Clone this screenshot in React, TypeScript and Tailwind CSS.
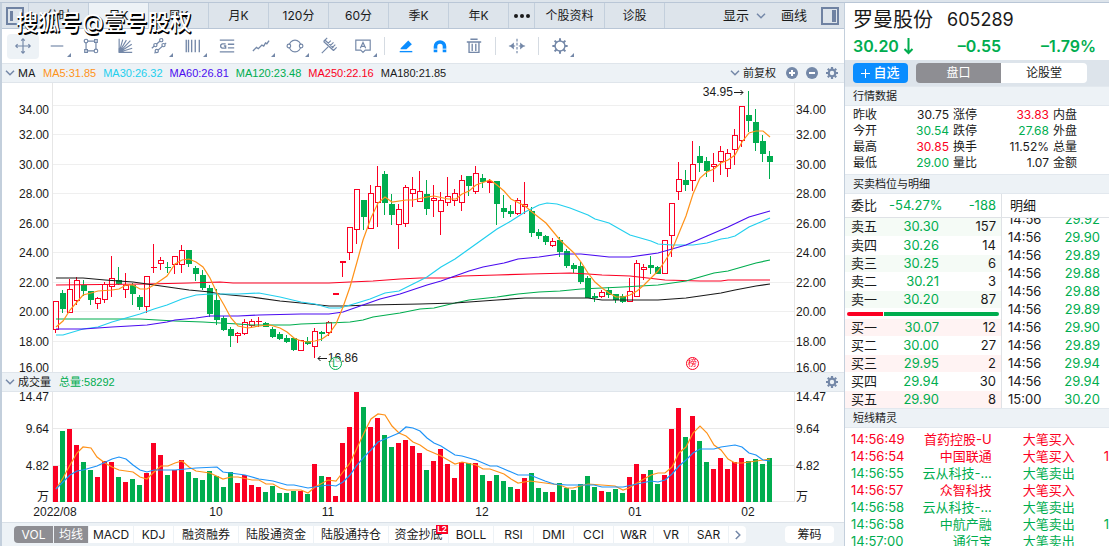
import { useState, type ReactNode } from "react";
import clsx from "clsx";

type Side = "R" | "G";
type Candle = [Side, number, number, number, number, number];

const RED = "#fb0023";
const GREEN = "#00ad4f";

// side, high, body top, body bottom, low, volume
const CANDLES: Candle[] = [
  ["R", 301, 301, 330, 333, 36], ["G", 290, 293, 309, 313, 71], ["R", 279, 289, 313, 313, 73],
  ["R", 277, 280, 301, 305, 57], ["G", 280, 285, 291, 296, 40], ["G", 291, 291, 300, 305, 32],
  ["R", 297, 298, 304, 309, 25], ["R", 282, 284, 300, 303, 41], ["R", 256, 278, 287, 297, 40],
  ["G", 267, 280, 284, 285, 25], ["R", 273, 285, 290, 298, 20], ["G", 283, 285, 294, 305, 23],
  ["G", 295, 297, 307, 310, 17], ["R", 276, 276, 307, 313, 29], ["R", 244, 267, 268, 273, 59],
  ["R", 257, 260, 264, 270, 47], ["G", 262, 267, 268, 273, 27], ["R", 256, 256, 265, 274, 32],
  ["R", 245, 250, 265, 273, 42], ["G", 250, 250, 264, 267, 30], ["G", 266, 268, 274, 281, 24],
  ["G", 270, 275, 288, 290, 22], ["G", 285, 288, 314, 317, 31], ["G", 289, 300, 320, 325, 26],
  ["G", 316, 318, 330, 331, 15], ["G", 327, 329, 336, 347, 30], ["R", 332, 333, 336, 343, 19],
  ["R", 319, 322, 334, 335, 27], ["R", 319, 321, 326, 328, 17], ["R", 317, 321, 322, 327, 15],
  ["G", 322, 323, 327, 327, 10], ["G", 327, 329, 337, 338, 16], ["G", 332, 334, 339, 340, 9],
  ["G", 335, 338, 342, 343, 9], ["G", 338, 338, 350, 351, 11], ["R", 340, 340, 351, 351, 11],
  ["G", 337, 341, 344, 345, 8], ["R", 328, 331, 347, 358, 38], ["G", 331, 332, 334, 341, 26],
  ["R", 321, 322, 333, 336, 25], ["R", 293, 293, 295, 295, 6], ["R", 261, 261, 263, 277, 59],
  ["R", 227, 227, 253, 260, 75], ["R", 189, 189, 230, 244, 110], ["G", 200, 200, 217, 230, 95],
  ["R", 185, 193, 229, 229, 75], ["R", 166, 186, 203, 227, 84], ["G", 171, 174, 203, 215, 67],
  ["G", 194, 204, 215, 225, 55], ["R", 204, 209, 225, 249, 59], ["R", 185, 187, 224, 227, 62],
  ["R", 177, 189, 194, 207, 56], ["R", 171, 191, 202, 202, 49], ["G", 180, 194, 209, 215, 32],
  ["R", 185, 198, 201, 217, 41], ["R", 192, 200, 212, 235, 53], ["R", 177, 196, 203, 206, 38],
  ["R", 189, 193, 201, 206, 24], ["R", 175, 180, 203, 211, 40], ["G", 176, 176, 186, 196, 39],
  ["R", 166, 173, 192, 194, 39], ["G", 174, 178, 182, 188, 27], ["R", 179, 181, 183, 193, 21],
  ["G", 181, 181, 204, 225, 27], ["G", 195, 208, 212, 218, 21], ["G", 205, 211, 214, 217, 15],
  ["R", 198, 200, 214, 215, 13], ["R", 182, 204, 207, 214, 24], ["G", 207, 211, 233, 237, 29],
  ["G", 229, 232, 236, 239, 14], ["G", 235, 236, 242, 245, 10], ["R", 238, 241, 246, 247, 10],
  ["G", 237, 240, 252, 257, 19], ["G", 249, 251, 266, 268, 14], ["G", 263, 265, 269, 273, 12],
  ["G", 262, 266, 282, 284, 18], ["G", 276, 278, 298, 298, 26], ["G", 293, 296, 298, 302, 15],
  ["R", 290, 292, 297, 298, 11], ["G", 287, 290, 295, 298, 10], ["G", 294, 294, 300, 303, 13],
  ["G", 294, 296, 302, 303, 9], ["R", 278, 291, 302, 302, 25], ["R", 260, 263, 297, 297, 38],
  ["R", 264, 267, 270, 280, 28], ["G", 256, 265, 268, 274, 32], ["G", 266, 267, 274, 274, 18],
  ["R", 240, 240, 274, 274, 27], ["R", 203, 203, 236, 257, 73], ["R", 162, 179, 192, 200, 94],
  ["G", 170, 180, 185, 191, 65], ["R", 141, 164, 181, 191, 86], ["G", 146, 156, 163, 172, 61],
  ["G", 157, 161, 171, 177, 40], ["R", 153, 164, 167, 182, 33], ["R", 146, 151, 162, 175, 44],
  ["R", 149, 153, 169, 177, 33], ["R", 129, 135, 150, 165, 40], ["R", 106, 106, 141, 147, 44],
  ["G", 91, 115, 121, 132, 41], ["G", 109, 122, 143, 151, 43], ["G", 135, 141, 154, 162, 38],
  ["G", 151, 156, 162, 179, 44],
];

const MA_LINES = [
  { color: "#fb0023", points: "56,285 147,284 189,283 220,282 233,283 329,283 350,282 373,281 400,279 420,278 448,278 462,276 497,275 530,274 570,273 588,274 602,275 630,276 665,280 700,281 721,281 728,280 770,280" },
  { color: "#00ad4f", points: "56,319 105,319 140,319 175,321 203,322 238,324 252,325 290,325 301,324 329,323 350,322 363,320 373,317 400,313 420,309 434,308 455,303 469,300 497,297 518,294 539,292 560,291 581,289 623,287 658,285 686,281 700,277 714,273 728,271 742,267 756,263 770,260" },
  { color: "#1a1a1a", points: "56,278 83,278 105,280 133,282 147,284 168,287 189,290 210,292 220,294 252,297 280,301 301,303 329,306 343,306 370,305 420,304 455,303 497,300 525,298 588,298 602,300 658,300 686,298 700,296 721,293 735,290 756,286 770,284" },
  { color: "#22cfee", points: "56,335 63,335 83,329 98,327 112,322 126,318 140,314 154,309 167,305 182,299 196,295 210,294 238,294 259,293 280,297 301,302 315,304 329,308 340,308 357,303 370,299 385,293 399,291 413,284 427,277 441,267 455,259 469,249 483,239 497,229 511,221 525,212 539,205 547,203 557,204 570,208 588,215 595,219 609,223 630,235 651,241 658,244 672,245 693,245 707,243 721,239 728,238 735,236 749,227 756,224 770,218" },
  { color: "#4b0cf0", points: "56,329 83,329 112,327 147,325 167,322 175,320 196,318 210,316 238,316 259,315 301,314 329,314 343,312 363,305 380,299 400,294 427,285 441,281 455,276 469,271 483,267 504,263 518,259 539,257 560,254 581,254 609,257 630,257 658,253 672,249 686,245 707,236 728,227 749,217 763,213 770,211" },
  { color: "#ff9219", points: "56,327 63,321 70,310 77,302 83,295 91,293 98,291 112,290 119,289 126,285 133,285 140,289 147,289 154,285 167,276 175,264 182,260 189,259 196,262 203,267 210,278 217,293 224,305 231,318 238,326 248,328 259,326 270,325 280,328 287,332 294,338 301,341 308,342 315,341 322,339 329,334 336,324 343,307 350,287 357,262 363,240 371,218 378,203 385,197 392,202 406,200 413,200 427,197 434,196 448,199 456,199 462,194 469,191 476,185 490,180 497,185 504,191 511,199 525,206 532,212 546,223 560,240 574,253 581,262 588,273 595,282 602,288 609,293 616,297 623,297 630,295 637,291 644,285 651,278 658,271 665,261 672,250 679,233 686,216 693,194 700,178 707,172 714,169 721,163 728,160 735,155 742,142 749,133 756,131 763,131 770,137" },
];

const VOL_LINES = [
  { color: "#ff9219", points: "56,489 63,478 70,465 77,453 83,447 91,448 97,457 105,463 112,467 119,470 126,471 133,472 140,477 147,479 154,472 161,466 168,466 175,463 182,461 189,467 196,471 210,473 223,479 231,477 238,477 252,480 259,480 266,484 273,484 280,488 287,490 301,490 308,493 315,487 328,480 336,481 343,472 350,463 357,448 364,433 371,419 378,414 385,415 392,426 399,433 406,436 413,442 420,445 427,450 441,456 448,460 455,464 462,462 476,465 483,469 490,469 504,474 511,479 518,483 530,481 560,485 567,488 573,488 588,484 615,486 623,490 629,488 637,483 651,475 658,473 665,473 672,467 679,453 686,447 693,433 700,426 707,433 714,445 721,450 728,459 735,463 742,463 749,462 763,460 770,459" },
  { color: "#1d93f8", points: "56,489 63,482 70,475 77,471 83,470 97,466 112,459 119,457 126,459 133,465 140,470 147,472 154,470 175,470 196,468 217,467 223,472 245,475 259,479 273,481 287,485 294,485 308,488 328,485 336,486 343,482 350,475 357,465 364,457 371,450 378,442 392,436 399,433 406,427 413,428 420,431 427,438 434,443 441,446 455,455 462,456 476,460 490,466 497,466 504,469 518,475 530,475 545,481 554,484 567,485 594,485 602,487 623,487 637,484 651,481 658,482 665,480 672,474 679,466 686,460 693,453 700,449 714,449 721,447 735,445 742,447 749,453 756,455 763,460 770,461" },
];

const PRICE_TICKS = [
  { label: "34.00", y: 27 }, { label: "32.00", y: 52 }, { label: "30.00", y: 82 },
  { label: "28.00", y: 111 }, { label: "26.00", y: 141 }, { label: "24.00", y: 170 },
  { label: "22.00", y: 200 }, { label: "20.00", y: 229 }, { label: "18.00", y: 259 },
  { label: "16.00", y: 285 },
];
const VOL_TICKS = [
  { label: "14.47", y: 5 }, { label: "9.64", y: 37 }, { label: "4.82", y: 74 }, { label: "万", y: 105 },
];
const PRICE_GRID = [105.5, 134.5, 164.5, 193.5, 223.5, 252.5, 282.5, 311.5, 341.5];
const MONTHS = [
  { label: "2022/08", x: 2 }, { label: "10", x: 163 }, { label: "11", x: 275 },
  { label: "12", x: 429 }, { label: "01", x: 582 }, { label: "02", x: 695 },
];

const PERIODS = ["分时", "日K", "周K", "月K", "120分", "60分", "季K", "年K"];

const MA_LEGEND = [
  { label: "MA5:31.85", cls: "text-[#ff9219]" },
  { label: "MA30:26.32", cls: "text-[#22cfee]" },
  { label: "MA60:26.81", cls: "text-[#4b0cf0]" },
  { label: "MA120:23.48", cls: "text-[#00ad4f]" },
  { label: "MA250:22.16", cls: "text-[#fb0023]" },
  { label: "MA180:21.85", cls: "text-[#1a1a1a]" },
];

const INDICATORS = [
  { label: "VOL", w: "w-[39px]", on: true },
  { label: "均线", w: "w-[34px]", on: true },
  { label: "MACD", w: "w-[44px]" },
  { label: "KDJ", w: "w-[39px]" },
  { label: "融资融券", w: "w-[64px]" },
  { label: "陆股通资金", w: "w-[74px]" },
  { label: "陆股通持仓", w: "w-[74px]" },
  { label: "资金抄底", w: "w-[59px]", badge: "L2" },
  { label: "BOLL", w: "w-[44px]" },
  { label: "RSI", w: "w-[39px]" },
  { label: "DMI", w: "w-[39px]" },
  { label: "CCI", w: "w-[39px]" },
  { label: "W&R", w: "w-[39px]" },
  { label: "VR", w: "w-[34px]" },
  { label: "SAR", w: "w-[39px]" },
];

const QUOTE = [
  ["昨收", "30.75", "k", "涨停", "33.83", "r", "内盘"],
  ["今开", "30.54", "g", "跌停", "27.68", "g", "外盘"],
  ["最高", "30.85", "r", "换手", "11.52%", "k", "总量"],
  ["最低", "29.00", "g", "量比", "1.07", "k", "金额"],
];
const TONE: Record<string, string> = { k: "text-[#1a1a1a]", r: "text-[#fb0023]", g: "text-[#00ad4f]" };

const ASKS = [["卖五", "30.30", "157"], ["卖四", "30.26", "14"], ["卖三", "30.25", "6"], ["卖二", "30.21", "3"], ["卖一", "30.20", "87"]];
const BIDS = [["买一", "30.07", "12"], ["买二", "30.00", "27"], ["买三", "29.95", "2"], ["买四", "29.94", "30"], ["买五", "29.90", "8"]];
const TRADES = [
  ["14:56", "29.92"], ["14:56", "29.90"], ["14:56", "29.89"], ["14:56", "29.88"], ["14:56", "29.88"], ["14:56", "29.89"],
  ["14:56", "29.90"], ["14:56", "29.89"], ["14:56", "29.94"], ["14:56", "29.94"], ["15:00", "30.20"],
];
const ALERTS = [
  { time: "14:56:49", name: "首药控股-U", kind: "大笔买入", tail: "" },
  { time: "14:56:54", name: "中国联通", kind: "大笔买入", tail: "1" },
  { time: "14:56:55", name: "云从科技-...", kind: "大笔卖出", tail: "" },
  { time: "14:56:57", name: "众智科技", kind: "大笔买入", tail: "" },
  { time: "14:56:58", name: "云从科技-...", kind: "大笔卖出", tail: "" },
  { time: "14:56:58", name: "中航产融", kind: "大笔卖出", tail: "1" },
  { time: "14:57:00", name: "通行宝", kind: "大笔卖出", tail: "" },
];

const TOOLS: { name: string; more?: boolean; art: ReactNode }[] = [
  { name: "移动", art: <path d="M10 2v16M2 10h16M8 4l2-2 2 2M8 16l2 2 2-2M4 8l-2 2 2 2M16 8l2 2-2 2" /> },
  { name: "线段", more: true, art: <path d="M3 10h14" /> },
  { name: "矩形", art: (
    <>
      <path d="M4.500 4.500h11v11h-11z" />
      <circle cx="4.500" cy="4.500" r="2" fill="#fff" />
      <circle cx="15.500" cy="15.500" r="2" fill="#fff" />
      <path d="M14 3h3v3h-3zM3 14h3v3H3z" fill="#fff" />
    </>
  ) },
  { name: "扇形线", art: (
    <>
      <path d="M3.500 2v15H18M3.500 17L7.500 3M3.500 17l8-13.500M3.500 17L16 4M3.500 17l14-9M3.500 17l14.500-4.500" />
      <path d="M3 12.500h4l1.500 4.500H3z" fill="currentColor" stroke="none" />
    </>
  ) },
  { name: "平行线", more: true, art: (
    <>
      <path d="M2 12.500L14 2M5 18L18 6.500" />
      <circle cx="6" cy="9" r="1.800" fill="#fff" />
      <circle cx="12.500" cy="3.500" r="1.800" fill="#fff" />
      <circle cx="7.500" cy="15.500" r="1.800" fill="#fff" />
      <circle cx="15" cy="9" r="1.800" fill="#fff" />
    </>
  ) },
  { name: "周期线", more: true, art: <path d="M2.500 3v14M5 3v14M8.500 3v14M12.500 3v14M17 3v14" strokeWidth="1.5" /> },
  { name: "黄金分割", art: (
    <path d="M2 3.500h16M11 8h7M11 12h7M2 16.500h16M8.500 7.700H4.500L3 9v2l1.500 1.300h4v-2.300H6.500" strokeWidth="1.5" />
  ) },
  { name: "波浪线", more: true, art: <path d="M1 15.500l4-4 2 1.500 4-4 2 1 2-3.500 1.500 1L19 4" strokeWidth="1.5" /> },
  { name: "圆形", more: true, art: (
    <>
      <circle cx="10" cy="10" r="6.500" />
      <circle cx="3.200" cy="10" r="2" fill="#fff" />
      <circle cx="16.800" cy="10" r="2" fill="#fff" />
    </>
  ) },
  { name: "叉线", art: <path d="M2 18l7-7M4 5l11 10M4 5l4-4M7.500 8.500L12 4M10 11l5-5M12.500 13L17 8.500M15 15l3.500-3.500M5 3l10 9" /> },
  { name: "文字", more: true, art: <path d="M2 3.500h16v11h-5.500L10 17l-2.500-2.500H2zM7 12.500L10 6l3 6.500M8 10.500h4" /> },
];

function Toolbutton({ name, more, active, children }: { name: string; more?: boolean; active?: boolean; children: ReactNode }) {
  return (
    <button
      type="button"
      aria-label={name}
      className={clsx("relative flex h-[25px] w-8 shrink-0 items-center justify-center text-[#7488a8]", active && "rounded-sm bg-[#edf2f6]")}
    >
      <svg width="18" height="18" viewBox="0 0 20 20" fill="none" stroke="currentColor" strokeWidth="1.3" aria-hidden="true">
        {children}
      </svg>
      {more && (
        <svg className="absolute right-0.5 bottom-0.5" width="4" height="4" viewBox="0 0 4 4" aria-hidden="true">
          <path d="M4 0v4H0z" fill="currentColor" />
        </svg>
      )}
    </button>
  );
}

function Chevron({ className }: { className?: string }) {
  return (
    <svg className={className} width="10" height="6" viewBox="0 0 10 6" fill="none" stroke="#7488a8" strokeWidth="1.5" aria-hidden="true">
      <path d="M1 .8l4 4 4-4" />
    </svg>
  );
}

function Gear() {
  return (
    <svg width="12" height="12" viewBox="0 0 12 12" fill="none" stroke="#7488a8" aria-hidden="true">
      <circle cx="6" cy="6" r="3.300" strokeWidth="2.200" />
      <path d="M6 0v2M6 10v2M0 6h2M10 6h2M1.800 1.800l1.400 1.400M8.800 8.800l1.400 1.400M1.800 10.200l1.400-1.400M8.800 3.200l1.400-1.400" strokeWidth="2.200" />
    </svg>
  );
}

function Separator() {
  return <span className="mx-[3px] h-[18px] w-px shrink-0 bg-[#d5dbe2]" />;
}

function PriceAxis({ ticks, side }: { ticks: { label: string; y: number }[]; side: "left" | "right" }) {
  return (
    <div className={clsx("relative shrink-0 text-[12px] leading-[14px]", side === "left" ? "w-[50px]" : "w-[49px]")}>
      {ticks.map((tick) => (
        <span
          key={tick.label}
          className={clsx("absolute -translate-y-1/2", side === "left" ? "right-[3px]" : "left-px")}
          style={{ top: tick.y }}
        >
          {tick.label}
        </span>
      ))}
    </div>
  );
}

function CandleShape({ candle, index }: { candle: Candle; index: number }) {
  const [side, high, top, bottom, low] = candle;
  const x = 53 + index * 7;
  const color = side === "R" ? RED : GREEN;
  const solid = side === "G" || bottom - top <= 2;
  return (
    <g shapeRendering="crispEdges">
      {high < top && <rect x={x + 2} y={high} width="1" height={top - high} fill={color} />}
      {low > bottom && <rect x={x + 2} y={bottom} width="1" height={low - bottom} fill={color} />}
      {solid ? (
        <rect x={x} y={top} width="6" height={bottom - top} fill={color} />
      ) : (
        <rect x={x + 0.5} y={top + 0.5} width="5" height={bottom - top - 1} fill="#fff" stroke={color} />
      )}
    </g>
  );
}

function SectionHead({ children }: { children: ReactNode }) {
  return (
    <h2 className="flex h-5 shrink-0 items-center border-y border-[#e2e8ee] bg-[#edf2f6] px-2 text-[11px]">{children}</h2>
  );
}

function DepthTable({ rows, tint }: { rows: string[][]; tint: string }) {
  return (
    <table className="w-full table-fixed text-[13px] leading-[17px] whitespace-nowrap">
      <tbody>
        {rows.map(([name, price, qty], i) => (
          <tr key={name} className={clsx("h-[18px] border-b border-white", i % 2 === 0 && tint)}>
            <th className="w-8 p-0 pl-1.5 text-left font-normal">{name}</th>
            <td className="w-[62px] p-0 text-right text-[#00ad4f]">{price}</td>
            <td className="p-0 pr-[5px] text-right">{qty}</td>
          </tr>
        ))}
      </tbody>
    </table>
  );
}

function ChartPanel() {
  const [period, setPeriod] = useState("日K");

  return (
    <main className="flex min-w-0 flex-1 flex-col border-l-2 border-[#c3cfdc]">
      {/* Period tabs */}
      <nav className="flex h-[26px] shrink-0 border-b border-[#b9c6d6] bg-[#dde4eb] text-[12px]">
        <button type="button" aria-label="左侧栏" className="flex w-[27px] shrink-0 items-center justify-center border-r border-[#c3cfdc]">
          <svg width="18" height="18" viewBox="0 0 18 18" aria-hidden="true">
            <rect x="1" y="1" width="16" height="16" fill="none" stroke="#6f82a2" strokeWidth="2" />
            <rect x="4" y="4" width="3" height="10" fill="#6f82a2" />
          </svg>
        </button>
        {PERIODS.map((p) => (
          <button
            key={p}
            type="button"
            onClick={() => setPeriod(p)}
            className={clsx("w-[60px] shrink-0 border-r border-[#c3cfdc]", period === p && "bg-[#edf2f6]")}
          >
            {p}
          </button>
        ))}
        <button type="button" aria-label="更多周期" className="flex w-[26px] shrink-0 items-center justify-center gap-0.5 border-r border-[#c3cfdc]">
          <i className="size-1 rounded-full bg-[#1a1a1a]" />
          <i className="size-1 rounded-full bg-[#1a1a1a]" />
          <i className="size-1 rounded-full bg-[#1a1a1a]" />
        </button>
        <button type="button" className="w-[70px] shrink-0 border-r border-[#c3cfdc]">个股资料</button>
        <button type="button" className="w-[60px] shrink-0 border-r border-[#c3cfdc]">诊股</button>
        <div className="ml-auto flex shrink-0 items-center pr-[5px] text-[13px]">
          <button type="button" aria-haspopup="menu" className="flex items-center gap-[7px]">
            显示
            <Chevron />
          </button>
          <button type="button" className="ml-[15px]">画线</button>
          <button type="button" aria-label="右侧栏" className="ml-3.5">
            <svg width="18" height="18" viewBox="0 0 18 18" aria-hidden="true">
              <rect x="1" y="1" width="16" height="16" fill="none" stroke="#6f82a2" strokeWidth="2" />
              <rect x="11" y="3" width="4" height="12" fill="#6f82a2" />
            </svg>
          </button>
        </div>
      </nav>

      {/* Drawing tools */}
      <div className="flex h-[34px] shrink-0 items-center gap-0.5 pl-[5px]">
        {TOOLS.map((tool, i) => (
          <Toolbutton key={tool.name} name={tool.name} more={tool.more} active={i === 0}>
            {tool.art}
          </Toolbutton>
        ))}
        <Separator />
        <Toolbutton name="画笔">
          <g fill="#0a8dff" stroke="none">
            <path d="M4 12.500L12.500 4l4 4-6 5.500H4z" />
            <path d="M3 15.500h14V17H3z" />
          </g>
        </Toolbutton>
        <Toolbutton name="磁吸">
          <path d="M5 17v-6.500a5 5 0 0 1 10 0V17" stroke="#0a8dff" strokeWidth="4" />
          <path d="M2.500 13.500h5M12.500 13.500h5" stroke="#fff" strokeWidth="1" />
        </Toolbutton>
        <Toolbutton name="删除">
          <path d="M2 5.500h16M6 2.500h8M4.500 5.500V17h11V5.500M8 7.500v8M12 7.500v8" strokeWidth="1.5" />
        </Toolbutton>
        <Separator />
        <Toolbutton name="区间">
          <path d="M10 2v16" strokeDasharray="3 1.500" />
          <path d="M6.500 6v8L2 10zM13.500 6v8l4.500-4z" fill="currentColor" stroke="none" />
          <path d="M1 10h7M12 10h7" />
        </Toolbutton>
        <Separator />
        <Toolbutton name="画线设置" more>
          <circle cx="10" cy="10" r="5.500" strokeWidth="1.600" />
          <path d="M10 1.500v3M10 15.500v3M1.500 10h3M15.500 10h3M4 4l2.100 2.100M13.900 13.900L16 16M4 16l2.100-2.100M13.900 6.100L16 4" strokeWidth="2.200" />
        </Toolbutton>
      </div>

      {/* Moving average legend */}
      <div className="flex h-5 shrink-0 items-center border-y border-[#dfe5eb] bg-[#edf2f6] pl-[3px] text-[11px]">
        <Chevron />
        <span className="ml-[3px] w-[25px]">MA</span>
        <div className="flex gap-[7px] font-[Liberation_Sans,sans-serif]">
          {MA_LEGEND.map((ma) => (
            <span key={ma.label} className={ma.cls}>{ma.label}</span>
          ))}
        </div>
        <div className="ml-auto flex items-center pr-1.5">
          <Chevron />
          <select aria-label="复权方式" className="ml-[3px] w-[43px] appearance-none bg-transparent text-[11px] leading-4 outline-none">
            <option>前复权</option>
            <option>后复权</option>
            <option>不复权</option>
          </select>
          <div className="flex gap-2">
            <button type="button" aria-label="放大">
              <svg width="12" height="12" viewBox="0 0 12 12" aria-hidden="true">
                <circle cx="6" cy="6" r="6" fill="#7488a8" />
                <path d="M3 6h6M6 3v6" stroke="#fff" strokeWidth="2" />
              </svg>
            </button>
            <button type="button" aria-label="缩小">
              <svg width="12" height="12" viewBox="0 0 12 12" aria-hidden="true">
                <circle cx="6" cy="6" r="6" fill="#7488a8" />
                <path d="M3 6h6" stroke="#fff" strokeWidth="2" />
              </svg>
            </button>
            <button type="button" aria-label="主图设置"><Gear /></button>
          </div>
        </div>
      </div>

      {/* Candles */}
      <div className="flex h-[289px] shrink-0 font-[Liberation_Sans,Noto_Sans_CJK_SC,sans-serif]">
        <PriceAxis ticks={PRICE_TICKS} side="left" />
        <div className="relative min-w-0 flex-1 border-x border-[#e6e6e6]">
          <svg className="block h-full w-full" viewBox="53 83 741 289" preserveAspectRatio="none" role="img" aria-label="日K线图">
            {PRICE_GRID.map((y) => (
              <path key={y} d={`M53 ${y}h741`} stroke="#efefef" />
            ))}
            {CANDLES.map((c, i) => (
              <CandleShape key={i} candle={c} index={i} />
            ))}
            {MA_LINES.map((l) => (
              <polyline key={l.color} points={l.points} fill="none" stroke={l.color} strokeWidth="1.200" />
            ))}
          </svg>
          <span className="absolute top-[2px] left-[87.700%] flex items-center gap-px text-[12px] leading-[14px]">
            34.95
            <svg width="10" height="7" viewBox="0 0 10 7" fill="none" stroke="#1a1a1a" aria-hidden="true">
              <path d="M0 3.500h9M6.500 1L9 3.500 6.500 6" />
            </svg>
          </span>
          <span className="absolute top-[268px] left-[35.600%] flex items-center gap-px text-[12px] leading-[14px]">
            <svg width="10" height="7" viewBox="0 0 10 7" fill="none" stroke="#1a1a1a" aria-hidden="true">
              <path d="M10 3.500H1M3.500 1L1 3.500 3.500 6" />
            </svg>
            16.86
          </span>
          <span className="absolute top-[274px] left-[37.200%] flex size-[13px] items-center justify-center rounded-full border border-[#00ad4f] bg-white/70 text-[10px] leading-none text-[#00ad4f]">
            L
          </span>
          <span className="absolute top-[274px] left-[85.400%] flex size-[13px] items-center justify-center rounded-full border border-[#fb0023] text-[9px] leading-none text-[#fb0023]">
            榜
          </span>
        </div>
        <PriceAxis ticks={PRICE_TICKS} side="right" />
      </div>

      {/* Volume */}
      <div className="flex h-5 shrink-0 items-center border-y border-[#dfe5eb] bg-[#edf2f6] pr-1.5 pl-[3px] text-[11px]">
        <Chevron />
        <span className="ml-[3px]">成交量</span>
        <span className="ml-2 font-[Liberation_Sans,Noto_Sans_CJK_SC,sans-serif] text-[#00ad4f]">总量:58292</span>
        <button type="button" aria-label="副图设置" className="ml-auto"><Gear /></button>
      </div>
      <div className="flex h-[110px] shrink-0 font-[Liberation_Sans,Noto_Sans_CJK_SC,sans-serif]">
        <PriceAxis ticks={VOL_TICKS} side="left" />
        <div className="min-w-0 flex-1 border-x border-[#e6e6e6]">
          <svg className="block h-full w-full" viewBox="53 392 741 110" preserveAspectRatio="none" role="img" aria-label="成交量图">
            <path d="M53 428.500h741M53 465.500h741M53 501.500h741" stroke="#e9e9e9" />
            {CANDLES.map(([side, , , , , vol], i) => (
              <rect key={i} x={53 + i * 7} y={502 - vol} width="5" height={vol} fill={side === "R" ? RED : GREEN} />
            ))}
            {VOL_LINES.map((l) => (
              <polyline key={l.color} points={l.points} fill="none" stroke={l.color} strokeWidth="1.200" />
            ))}
          </svg>
        </div>
        <PriceAxis ticks={VOL_TICKS} side="right" />
      </div>
      <div className="flex h-5 shrink-0 font-[Liberation_Sans,sans-serif] text-[12px] leading-5">
        <div className="relative mr-[50px] ml-[51px] flex-1">
          {MONTHS.map((m) => (
            <span key={m.label} className="absolute -translate-x-1/2" style={{ left: `${(m.x / 741) * 100}%` }}>
              {m.label}
            </span>
          ))}
        </div>
      </div>

      {/* Indicator tabs */}
      <div className="flex h-6 shrink-0 items-center border-t border-[#d9e0e7] bg-[#edf2f6] pr-2.5 pl-3 text-[12px]">
        <div className="flex h-[17px] gap-px">
          {INDICATORS.map((item) => (
            <button
              key={item.label}
              type="button"
              className={clsx(
                "relative shrink-0 leading-[17px] whitespace-nowrap first:rounded-l",
                item.w,
                item.on ? "bg-[#8e8e93] text-white" : "bg-white",
              )}
            >
              {item.label}
              {item.badge && (
                <span className="absolute -top-px right-0 h-[9px] w-3 bg-[#fb0023] text-[8px] leading-[9px] font-bold text-white">
                  {item.badge}
                </span>
              )}
            </button>
          ))}
          <button type="button" aria-label="更多指标" className="flex w-[17px] items-center justify-center rounded-r bg-white">
            <Chevron className="-rotate-90" />
          </button>
        </div>
        <button type="button" className="ml-auto h-[17px] w-[49px] rounded bg-white leading-[17px]">筹码</button>
      </div>
    </main>
  );
}

function QuotePanel() {
  return (
    <aside className="flex w-[265px] shrink-0 flex-col overflow-hidden border-l border-[#c3cfdc]">
      <div className="h-[57px] shrink-0 pr-[13px] pl-2">
        <h1 className="flex h-[33px] items-center gap-[14px] text-[20px]">
          罗曼股份
          <span className="text-[18px]">605289</span>
        </h1>
        <div className="flex h-5 items-center text-[16px] font-semibold text-[#00ad4f]">
          <span className="flex w-[70px] items-center gap-1">
            30.20
            <svg width="11" height="17" viewBox="0 0 11 17" fill="none" stroke="currentColor" strokeWidth="2" aria-hidden="true">
              <path d="M5.500 0v15M1.500 11l4 4 4-4" />
            </svg>
          </span>
          <span className="w-[78px] text-right">–0.55</span>
          <span className="flex-1 text-right">–1.79%</span>
        </div>
      </div>

      <div className="flex h-[26px] shrink-0 items-center bg-[#dde4eb] pl-2 text-[12px]">
        <button type="button" className="flex h-5 w-[55px] items-center justify-center gap-[3px] rounded bg-[#0a8dff] text-[13px] font-medium text-white">
          <svg width="9" height="9" viewBox="0 0 9 9" stroke="currentColor" aria-hidden="true">
            <path d="M0 4.500h9M4.500 0v9" />
          </svg>
          自选
        </button>
        <div className="ml-2 flex h-5">
          <button type="button" className="w-[85px] rounded-l bg-[#8e8e93] text-white">盘口</button>
          <button type="button" className="w-[86px] rounded-r bg-white">论股堂</button>
        </div>
      </div>

      <SectionHead>行情数据</SectionHead>
      <div className="h-[68px] shrink-0 pt-px">
        <table className="w-full text-[12px] leading-4">
          <tbody>
            {QUOTE.map(([a, av, at, b, bv, bt, c]) => (
              <tr key={a}>
                <th className="w-9 p-0 pl-2 text-left font-normal">{a}</th>
                <td className={clsx("w-[68px] p-0 text-right", TONE[at])}>{av}</td>
                <th className="w-9 p-0 pl-1 text-left font-normal">{b}</th>
                <td className={clsx("w-16 p-0 text-right", TONE[bt])}>{bv}</td>
                <th className="p-0 pl-1 text-left font-normal">{c}</th>
              </tr>
            ))}
          </tbody>
        </table>
      </div>

      <SectionHead>买卖档位与明细</SectionHead>
      <div className="flex h-[214px] shrink-0">
        <div className="w-[157px] shrink-0 border-r border-[#dfe2e6]">
          <div className="flex h-6 items-center border-b border-[#dfe2e6] pr-[5px] pl-1.5 text-[13px]">
            <span className="w-[38px]">委比</span>
            <span className="text-[#00ad4f]">-54.27%</span>
            <span className="ml-auto text-[#00ad4f]">-188</span>
          </div>
          <DepthTable rows={ASKS} tint="bg-[#f5fbf6]" />
          <div className="flex h-2.5 items-center gap-px px-0.5">
            <span className="h-1 flex-[36] rounded-l-full bg-[#fb0023]" />
            <span className="h-1 flex-[115] rounded-r-full bg-[#00ad4f]" />
          </div>
          <DepthTable rows={BIDS} tint="bg-[#fff3f3]" />
        </div>
        <div className="flex min-w-0 flex-1 flex-col">
          <h3 className="flex h-6 shrink-0 items-center border-b border-[#dfe2e6] pl-2 text-[13px]">明细</h3>
          <div className="flex min-h-0 flex-1 flex-col justify-end overflow-hidden">
            <table className="w-full shrink-0 text-[13px] leading-[18px]">
              <tbody>
                {TRADES.map(([time, price], i) => (
                  <tr key={i} className="h-[18px]">
                    <td className="p-0 pl-1.5">{time}</td>
                    <td className="p-0 pr-[9px] text-right text-[#00ad4f]">{price}</td>
                  </tr>
                ))}
              </tbody>
            </table>
          </div>
        </div>
      </div>

      <SectionHead>短线精灵</SectionHead>
      <div className="min-h-0 flex-1 overflow-hidden pt-[3px]">
        <table className="w-full text-[13px] leading-[17px]">
          <tbody>
            {ALERTS.map((alert, i) => (
              <tr key={i} className={clsx("h-[17px]", alert.kind === "大笔买入" ? "text-[#fb0023]" : "text-[#00ad4f]")}>
                <td className="w-[64px] p-0 pl-1.5">{alert.time}</td>
                <td className="w-[83px] p-0 text-right whitespace-nowrap">{alert.name}</td>
                <td className="w-[84px] p-0 text-right">{alert.kind}</td>
                <td className="p-0 pl-[29px]">{alert.tail}</td>
              </tr>
            ))}
          </tbody>
        </table>
      </div>
    </aside>
  );
}

export default function App() {
  return (
    <div className="relative flex h-screen flex-col overflow-hidden bg-white font-[Inter,Noto_Sans_CJK_SC,sans-serif] text-[#1a1a1a]">
      <div className="h-[3px] shrink-0 border-b border-[#b9c6d6] bg-[#dde4eb]" />
      <div className="flex min-h-0 flex-1">
        <ChartPanel />
        <QuotePanel />
      </div>
      <div className="pointer-events-none absolute top-1 left-4 text-[22px] leading-9 font-medium text-white [text-shadow:1px_2px_0_#000,1px_1px_0_#000]">
        搜狐号@壹号股权
      </div>
    </div>
  );
}
